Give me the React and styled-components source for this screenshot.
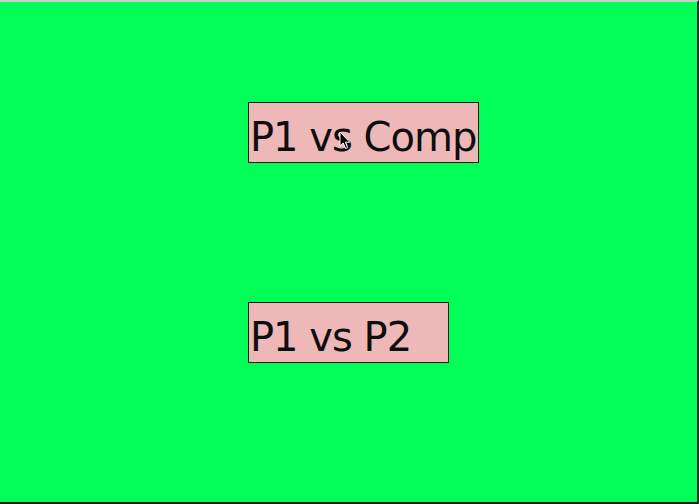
import React from 'react';
import styled, { createGlobalStyle } from 'styled-components';

const GlobalStyle = createGlobalStyle`
  html, body {
    margin: 0;
    padding: 0;
    overflow: hidden;
  }
  * { box-sizing: border-box; }
`

const Screen = styled.div`
  position: relative;
  width: 699px;
  height: 504px;
  background: #00fe56;
  border-top: 2px solid #c4cfc6;
  border-right: 2px solid #2a2a2a;
  border-bottom: 2px solid #1c1c1c;
  display: flex;
  flex-direction: column;
  align-items: flex-start;
  gap: 139px;
  padding: 100px 0 0 248px;
`

const MenuButton = styled.div`
  width: ${props => props.width}px;
  height: 61px;
  background: #efb8b8;
  border: 1px solid #1a1a1a;
  padding: 10px 0 0 1px;
  font-family: "DejaVu Sans", sans-serif;
  font-size: 40px;
  line-height: 49px;
  letter-spacing: -1px;
  color: #0d0d0d;
  white-space: nowrap;
  overflow: hidden;
  cursor: default;
`

const Pointer = styled.svg`
  position: absolute;
  left: 339px;
  top: 129px;
`

export default function App() {
  return (
    <>
      <GlobalStyle />
      <Screen>
        <MenuButton width={231}>P1 vs Comp</MenuButton>
        <MenuButton width={201}>P1 vs P2</MenuButton>
        <Pointer width="12" height="19" viewBox="0 0 12 19">
          <path d="M1 1 L1 15 L4.2 12 L6.6 17.5 L8.7 16.6 L6.3 11.2 L10.8 11.2 Z" fill="#000" stroke="#fff" strokeWidth="1" />
        </Pointer>
      </Screen>
    </>
  );
}
